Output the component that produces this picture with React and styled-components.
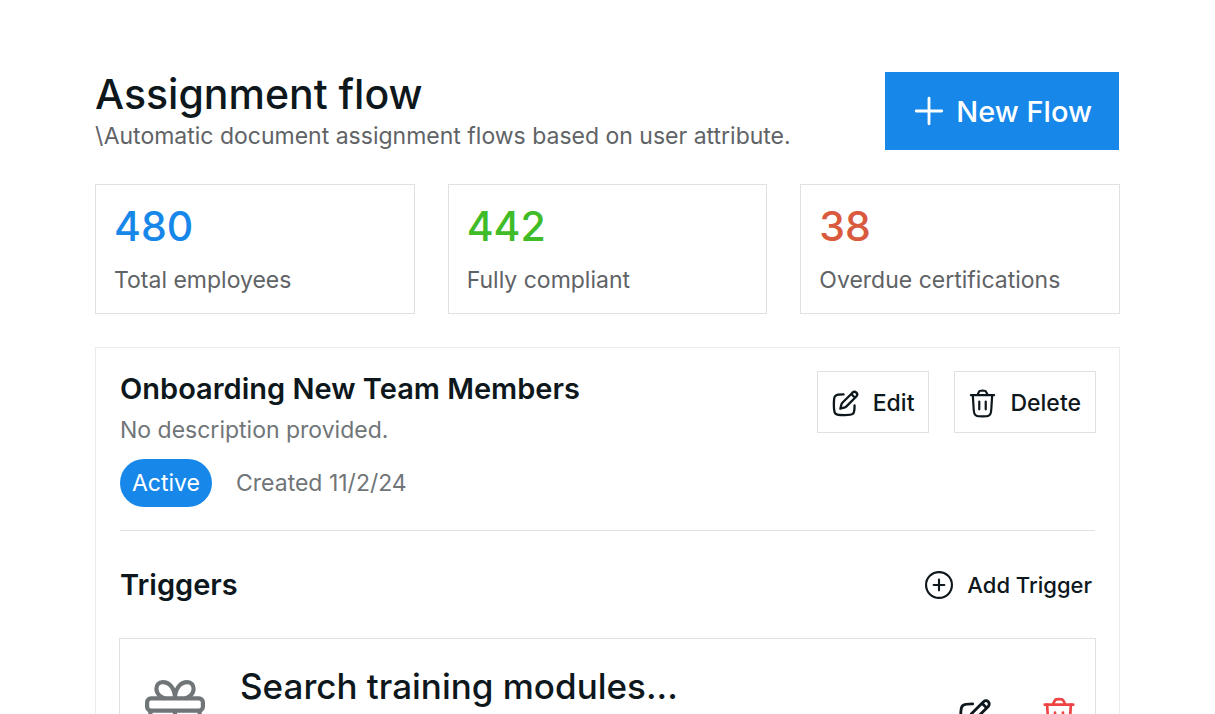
import React from 'react'
import styled, { createGlobalStyle } from 'styled-components'

const GlobalStyle = createGlobalStyle`
      * {
            box-sizing : border-box;
      }

      body {
            margin : 0;
            background-color : #ffffff;
            color : #0d171c;
            font-family : "Inter", "Liberation Sans", sans-serif;
      }

      h1, h2, h3, p {
            margin : 0;
      }

      button {
            font-family : inherit;
            color : inherit;
            cursor : pointer;
      }
`

const Page = styled.main`
      padding : 72px 95px 0;
`

const Header = styled.header`
      display : flex;
      justify-content : space-between;
      align-items : flex-start;
      margin-bottom : 32px;
`

const Title = styled.h1`
      margin-bottom : 3px;
      font-size : 41px;
      line-height : 45px;
      font-weight : 500;
`

const Muted = styled.p`
      font-size : 23px;
      line-height : 32px;
      color : ${props => props.$light ? '#707578' : '#5f6366'};
`

const NewFlow = styled.button`
      display : flex;
      align-items : center;
      gap : 10px;
      height : 78px;
      margin-right : 1px;
      padding : 0 27px;
      border : none;
      background-color : #1788ea;
      color : #ffffff;
      font-size : 29px;
      font-weight : 500;
      white-space : nowrap;
`

const Stats = styled.section`
      display : grid;
      grid-template-columns : repeat(3, 1fr);
      gap : 33px;
      margin-bottom : 33px;
`

const Stat = styled.div`
      padding : 16px 18px 17px;
      border : 1px solid #dfe1e2;
`

const StatValue = styled.h2`
      margin-bottom : 13px;
      font-size : 41px;
      line-height : 50px;
      font-weight : 500;
      color : ${props => props.$color};
`

const Panel = styled.section`
      padding : 23px 23px 32px;
      border : 1px solid #e9ebec;
`

const Row = styled.div`
      display : flex;
      justify-content : space-between;
      align-items : flex-start;
`

const Heading = styled.h2`
      font-size : 29px;
      line-height : 36px;
      font-weight : 600;
`

const FlowInfo = styled.div`
      padding-left : 1px;
`

const FlowText = styled(Muted)`
      margin-top : 7px;
`

const Actions = styled.div`
      display : flex;
      gap : 25px;
`

const ActionButton = styled.button`
      display : flex;
      align-items : center;
      gap : 12px;
      height : 62px;
      padding : 2px 14px 0 12px;
      border : 1px solid #dfe1e2;
      background-color : #ffffff;
      font-size : 23px;
      font-weight : 500;
`

const Meta = styled.div`
      display : flex;
      align-items : center;
      gap : 24px;
      margin : 13px 0 23px;
`

const Badge = styled.span`
      padding : 8px 12px;
      border-radius : 24px;
      background-color : #1788ea;
      color : #ffffff;
      font-size : 23px;
      line-height : 32px;
`

const Divider = styled.hr`
      margin : 0 1px;
      border : 0;
      border-top : 1px solid #dfe1e2;
`

const TriggerBar = styled(Row)`
      align-items : center;
      padding : 36px 4px 35px 1px;
`

const AddTrigger = styled.button`
      display : flex;
      align-items : center;
      gap : 12px;
      padding : 0;
      border : none;
      background : none;
      font-size : 22px;
      font-weight : 500;
`

const Trigger = styled.article`
      display : flex;
      align-items : flex-start;
      padding : 23px 17px 32px 19px;
      border : 1px solid #dfe1e2;
`

const TriggerTitle = styled.h3`
      flex : 1;
      margin-left : 29px;
      font-size : 35px;
      line-height : 48px;
      font-weight : 500;
`

const TriggerActions = styled.div`
      display : flex;
      gap : 46px;
      padding-top : 34px;
`

const IconButton = styled.button`
      display : flex;
      padding : 0;
      border : none;
      background : none;
      color : ${props => props.$danger ? '#ef4444' : 'inherit'};
`

const Icon = styled.svg`
      display : block;
      flex : none;
      fill : none;
      stroke : currentColor;
      stroke-width : ${props => props.$stroke || 1.6};
      stroke-linecap : round;
      stroke-linejoin : round;
`

const GiftSvg = styled(Icon)`
      color : #707578;
      margin-top : 12px;
`

function PlusIcon() {
      return (
            <Icon $stroke={2} width="34" height="34" viewBox="0 0 24 24" aria-hidden="true">
                  <path d="M12 3v18M3 12h18" />
            </Icon>
      )
}

function AddIcon() {
      return (
            <Icon width="32" height="32" viewBox="0 0 24 24" aria-hidden="true">
                  <circle cx="12" cy="12" r="9.7" />
                  <path d="M12 8v8M8 12h8" />
            </Icon>
      )
}

function EditIcon({ size = 31 }) {
      return (
            <Icon $stroke={1.8} width={size} height={size} viewBox="0 0 24 24" aria-hidden="true">
                  <path d="M16.425 4.605l.99-.99a2.1 2.1 0 0 1 2.97 2.97l-.99.99M16.425 4.605l-6.66 6.66a4 4 0 0 0-1.04 1.84L8 16l2.896-.724a4 4 0 0 0 1.84-1.04l6.659-6.661M16.425 4.605l2.97 2.97" />
                  <path d="M19 13.5c0 3.288 0 4.931-.908 6.038a3.4 3.4 0 0 1-.554.554C16.43 21 14.787 21 11.5 21H11c-3.771 0-5.657 0-6.828-1.172C3 18.657 3 16.771 3 13v-.5c0-3.287 0-4.931.908-6.038a3.4 3.4 0 0 1 .554-.554C5.57 5 7.213 5 10.5 5" />
            </Icon>
      )
}

function TrashIcon({ size = 31 }) {
      return (
            <Icon $stroke={1.7} width={size} height={size} viewBox="0 0 24 24" aria-hidden="true">
                  <path d="M19.5 5.5l-.62 10.025c-.158 2.561-.237 3.842-.88 4.763a4 4 0 0 1-1.2 1.128C15.842 22 14.56 22 11.993 22c-2.57 0-3.855 0-4.814-.585a4 4 0 0 1-1.2-1.13c-.642-.922-.72-2.205-.874-4.77L4.5 5.5" />
                  <path d="M3 5.5h18M16.056 5.5l-.683-1.408c-.453-.936-.68-1.403-1.071-1.695a2 2 0 0 0-.275-.172C13.594 2 13.074 2 12.035 2c-1.066 0-1.599 0-2.04.234a2 2 0 0 0-.278.18c-.395.303-.616.788-1.058 1.757L8.053 5.5" />
                  <path d="M9.5 16.5v-6M14.5 16.5v-6" />
            </Icon>
      )
}

function GiftIcon() {
      return (
            <GiftSvg $stroke={1.4} width="72" height="72" viewBox="0 0 24 24" aria-hidden="true">
                  <rect x="2.7" y="8.1" width="18.6" height="4.1" rx="1.3" />
                  <path d="M3.8 12.4V19a2 2 0 0 0 2 2h12.4a2 2 0 0 0 2-2v-6.6M12 12.4V21" />
                  <path d="M12 8C12 5 10.3 2.7 7.9 2.7 6.5 2.7 5.8 3.7 5.8 4.9 5.8 6.2 6.8 7.4 8.2 8" />
                  <path d="M12 8C12 5 13.7 2.7 16.1 2.7 17.5 2.7 18.2 3.7 18.2 4.9 18.2 6.2 17.2 7.4 15.8 8" />
            </GiftSvg>
      )
}

const stats = [
      { value : '480', label : 'Total employees', color : '#1788ea' },
      { value : '442', label : 'Fully compliant', color : '#3fbc27' },
      { value : '38', label : 'Overdue certifications', color : '#d95a3d' }
]

function App() {
      return (
            <>
                  <GlobalStyle />
                  <Page>
                        <Header>
                              <div>
                                    <Title>Assignment flow</Title>
                                    <Muted>\Automatic document assignment flows based on user attribute.</Muted>
                              </div>
                              <NewFlow><PlusIcon />New Flow</NewFlow>
                        </Header>
                        <Stats>
                              {stats.map(stat => (
                                    <Stat key={stat.label}>
                                          <StatValue $color={stat.color}>{stat.value}</StatValue>
                                          <Muted>{stat.label}</Muted>
                                    </Stat>
                              ))}
                        </Stats>
                        <Panel>
                              <Row>
                                    <FlowInfo>
                                          <Heading>Onboarding New Team Members</Heading>
                                          <FlowText $light>No description provided.</FlowText>
                                          <Meta>
                                                <Badge>Active</Badge>
                                                <Muted $light>Created 11/2/24</Muted>
                                          </Meta>
                                    </FlowInfo>
                                    <Actions>
                                          <ActionButton><EditIcon />Edit</ActionButton>
                                          <ActionButton><TrashIcon />Delete</ActionButton>
                                    </Actions>
                              </Row>
                              <Divider />
                              <TriggerBar>
                                    <Heading>Triggers</Heading>
                                    <AddTrigger><AddIcon />Add Trigger</AddTrigger>
                              </TriggerBar>
                              <Trigger>
                                    <GiftIcon />
                                    <TriggerTitle>Search training modules...</TriggerTitle>
                                    <TriggerActions>
                                          <IconButton aria-label="Edit trigger"><EditIcon size={38} /></IconButton>
                                          <IconButton $danger aria-label="Delete trigger"><TrashIcon size={38} /></IconButton>
                                    </TriggerActions>
                              </Trigger>
                        </Panel>
                  </Page>
            </>
      )
}

export default App
